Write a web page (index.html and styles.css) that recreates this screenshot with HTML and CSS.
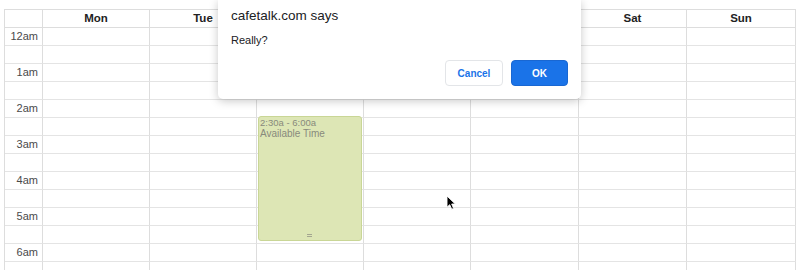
FILE: index.html
```html
<!DOCTYPE html>
<html>
<head>
<meta charset="utf-8">
<link rel="stylesheet" href="styles.css">
</head>
<body>
<div class="cal">
  <div class="head">
    <div class="hcell"></div>
    <div class="hcell">Mon</div>
    <div class="hcell">Tue</div>
    <div class="hcell">Wed</div>
    <div class="hcell">Thu</div>
    <div class="hcell">Fri</div>
    <div class="hcell">Sat</div>
    <div class="hcell">Sun</div>
  </div>
  <div class="body">
    <div class="slots">
      <div class="row"><div class="time">12am</div><div class="c"></div><div class="c"></div><div class="c"></div><div class="c"></div><div class="c"></div><div class="c"></div><div class="c"></div></div>
      <div class="row"><div class="time"></div><div class="c"></div><div class="c"></div><div class="c"></div><div class="c"></div><div class="c"></div><div class="c"></div><div class="c"></div></div>
      <div class="row"><div class="time">1am</div><div class="c"></div><div class="c"></div><div class="c"></div><div class="c"></div><div class="c"></div><div class="c"></div><div class="c"></div></div>
      <div class="row"><div class="time"></div><div class="c"></div><div class="c"></div><div class="c"></div><div class="c"></div><div class="c"></div><div class="c"></div><div class="c"></div></div>
      <div class="row"><div class="time">2am</div><div class="c"></div><div class="c"></div><div class="c"></div><div class="c"></div><div class="c"></div><div class="c"></div><div class="c"></div></div>
      <div class="row"><div class="time"></div><div class="c"></div><div class="c"></div><div class="c"></div><div class="c"></div><div class="c"></div><div class="c"></div><div class="c"></div></div>
      <div class="row"><div class="time">3am</div><div class="c"></div><div class="c"></div><div class="c"></div><div class="c"></div><div class="c"></div><div class="c"></div><div class="c"></div></div>
      <div class="row"><div class="time"></div><div class="c"></div><div class="c"></div><div class="c"></div><div class="c"></div><div class="c"></div><div class="c"></div><div class="c"></div></div>
      <div class="row"><div class="time">4am</div><div class="c"></div><div class="c"></div><div class="c"></div><div class="c"></div><div class="c"></div><div class="c"></div><div class="c"></div></div>
      <div class="row"><div class="time"></div><div class="c"></div><div class="c"></div><div class="c"></div><div class="c"></div><div class="c"></div><div class="c"></div><div class="c"></div></div>
      <div class="row"><div class="time">5am</div><div class="c"></div><div class="c"></div><div class="c"></div><div class="c"></div><div class="c"></div><div class="c"></div><div class="c"></div></div>
      <div class="row"><div class="time"></div><div class="c"></div><div class="c"></div><div class="c"></div><div class="c"></div><div class="c"></div><div class="c"></div><div class="c"></div></div>
      <div class="row"><div class="time">6am</div><div class="c"></div><div class="c"></div><div class="c"></div><div class="c"></div><div class="c"></div><div class="c"></div><div class="c"></div></div>
      <div class="row"><div class="time"></div><div class="c"></div><div class="c"></div><div class="c"></div><div class="c"></div><div class="c"></div><div class="c"></div><div class="c"></div></div>
    </div>
    <div class="cols">
      <div class="col"></div>
      <div class="col"></div>
      <div class="col"></div>
      <div class="col">
        <div class="event">
          <div class="ev-time">2:30a - 6:00a</div>
          <div class="ev-title">Available Time</div>
          <div class="ev-handle"></div>
        </div>
      </div>
      <div class="col"></div>
      <div class="col"></div>
      <div class="col"></div>
      <div class="col"></div>
    </div>
  </div>
</div>

<div class="dialog">
  <div class="dlg-title">cafetalk.com says</div>
  <div class="dlg-msg">Really?</div>
  <div class="dlg-actions">
    <button class="btn btn-cancel">Cancel</button>
    <button class="btn btn-ok">OK</button>
  </div>
</div>

<svg class="cursor" width="11" height="16" viewBox="0 0 11 16">
  <path d="M1 1 L1 12.2 L3.7 9.7 L5.7 14.2 L7.6 13.4 L5.7 9 L9.3 9 Z" fill="#000" stroke="#fff" stroke-width="0.9" stroke-linejoin="round"/>
</svg>
</body>
</html>
```

FILE: styles.css
```css
html, body {
  margin: 0;
  padding: 0;
  background: #fff;
  overflow: hidden;
  width: 800px;
  height: 270px;
}

body {
  font-family: "Liberation Sans", Arial, Helvetica, sans-serif;
  color: #333;
  position: relative;
}

.cal {
  margin: 9px 0 0 4px;
  width: 792px;
  box-sizing: border-box;
  border-left: 1px solid #ddd;
  border-top: 1px solid #ddd;
}

.head,
.row,
.cols {
  display: grid;
  grid-template-columns: 38px 107px 107px 107px 107px 108px 108px 109px;
}

.hcell {
  height: 18px;
  box-sizing: border-box;
  border-right: 1px solid #ddd;
  border-bottom: 1px solid #ddd;
  font-size: 11.5px;
  font-weight: bold;
  color: #222;
  text-align: center;
  line-height: 17px;
}

.body {
  position: relative;
}

.time,
.c {
  height: 18px;
  box-sizing: border-box;
  border-right: 1px solid #ddd;
  border-bottom: 1px solid #e4e4e4;
}

.time {
  font-size: 11px;
  color: #4a4a4a;
  text-align: right;
  padding-right: 4px;
  line-height: 17px;
}

.cols {
  position: absolute;
  inset: 0;
}

.col {
  position: relative;
}

.event {
  position: absolute;
  left: 1px;
  right: 2px;
  top: 88px;
  height: 125px;
  box-sizing: border-box;
  background: #dde6b5;
  border: 1px solid #c9d696;
  border-radius: 3px;
  padding: 1px 1px;
  color: #888a7c;
}

.ev-time {
  font-size: 9.5px;
  line-height: 10px;
}

.ev-title {
  font-size: 10px;
  line-height: 12px;
}

.ev-handle {
  position: absolute;
  left: 50%;
  bottom: 3px;
  width: 5px;
  height: 3px;
  margin-left: -3px;
  border-top: 1px solid #a4a690;
  border-bottom: 1px solid #a4a690;
  box-sizing: border-box;
}

.dialog {
  position: absolute;
  left: 218px;
  top: 0;
  width: 363px;
  box-sizing: border-box;
  background: #fff;
  border-radius: 0 0 5px 5px;
  box-shadow: 0 2px 10px rgba(0, 0, 0, 0.22);
  padding: 7px 13px 13px 13px;
  color: #202124;
}

.dlg-title {
  font-size: 13.5px;
  line-height: 18px;
}

.dlg-msg {
  margin-top: 7px;
  font-size: 11px;
  line-height: 16px;
}

.dlg-actions {
  margin-top: 12px;
  display: flex;
  justify-content: flex-end;
  gap: 8px;
}

.btn {
  height: 26px;
  box-sizing: border-box;
  border-radius: 4px;
  font-family: "Liberation Sans", Arial, sans-serif;
  font-size: 10px;
  font-weight: bold;
  padding: 0;
  margin: 0;
}

.btn-cancel {
  width: 58px;
  background: #fff;
  color: #1a73e8;
  border: 1px solid #e3e5e8;
}

.btn-ok {
  width: 57px;
  background: #1a73e8;
  color: #fff;
  border: 1px solid #1967d2;
}

.cursor {
  position: absolute;
  left: 446px;
  top: 195px;
}
```
